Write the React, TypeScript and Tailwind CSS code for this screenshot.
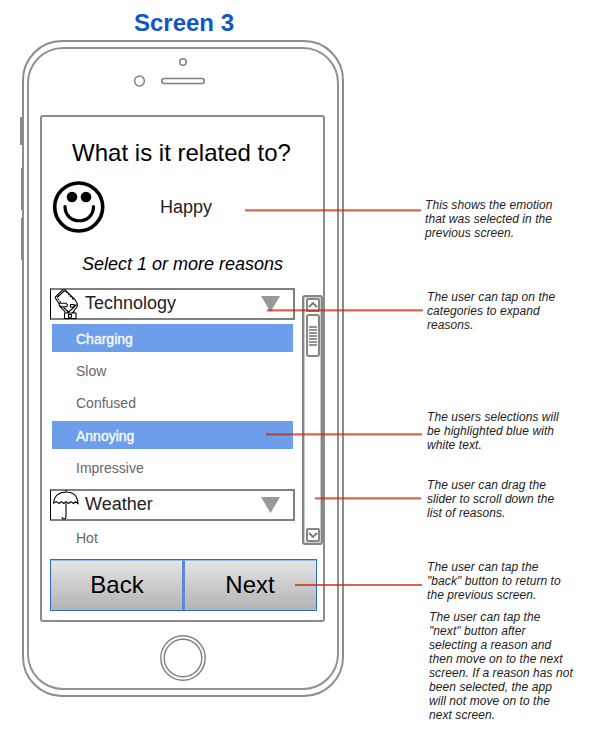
import React from "react";

const HandPhoneIcon = () => (
  <svg className="ml-[3px] h-[30px] w-[25px] shrink-0" viewBox="0 0 25 30" fill="none" stroke="#000" strokeWidth="1.1">
    <path d="M1 8.500 8.500 1 11 .8 21 10.500l2.500 4.500-.5 3-3 3.500v2M1 8.500 5 14.500M3.200 8.500 9.500 2.500l2-.2" />
    <path d="M3.500 9.500 7 13.500M12 2.500l8 8.500" strokeDasharray="2 1" />
    <path d="M5.200 14.200h6.800l1.500 1.800-1 1.800H7.500l-2.300-1.600zM5.500 17l3.500 3.500 2.500 3M9.500 18.500l5 4.500 3-2.500 5-5M16.500 15.500h3.500v2.500h-3.500z" />
    <path d="M10.500 24h11.500v5.500h-11.500zM13 22.500l2 1.500M20 22.500l-2 1.500M14.500 25.500h3v2.800h-3z" />
  </svg>
);

const UmbrellaIcon = () => (
  <svg className="ml-[2px] h-[30px] w-[26px] shrink-0" viewBox="0 0 26 30" fill="none" stroke="#000" strokeWidth="1.1">
    <path d="M13 0v2M.7 13C1 6 6 2 13 2s11.600 4 12 11.500l-2.400-1.800-2.200 1.800-2.500-1.900-2.200 1.900-2.700-1.900-2.300 1.900-2.400-1.900-2.200 1.900-2.700-1.900z" />
    <path d="M13 13v13.500c0 3.200-4 3.200-4 .5" />
  </svg>
);

const Category = ({ icon, label }: { icon: React.ReactNode; label: string }) => (
  <div className="flex h-8 w-[245px] items-center border-2 border-l border-[#808080] border-l-black">
    {icon}
    <span className="-mt-[3px] ml-auto w-[176px] text-lg leading-6 text-[#222]">{label}</span>
    <svg className="-mt-px mr-[13px] h-4 w-[19px] shrink-0" viewBox="0 0 19 16">
      <path d="M0 0h19L9.500 16z" fill="#999" />
    </svg>
  </div>
);

const Reason = ({ label, selected = false }: { label: string; selected?: boolean }) => (
  <div
    className={`ml-[2px] flex h-7 w-[241px] items-center pl-6 text-sm ${
      selected ? "bg-[#6d9eeb] text-white [-webkit-text-stroke:0.3px_white]" : "text-[#666]"
    }`}
  >
    <span className="mt-[2px]">{label}</span>
  </div>
);

const Chevron = ({ d }: { d: string }) => (
  <div className="grid h-[14px] w-[14px] shrink-0 place-items-center rounded-[2px] border-2 border-[#858585]">
    <svg className="h-[10px] w-[10px]" viewBox="0 0 10 10" fill="none" stroke="#777" strokeWidth="1.8">
      <path d={d} />
    </svg>
  </div>
);

const Scrollbar = () => (
  <div className="mt-[7px] ml-[7px] flex h-[250px] w-[21px] flex-col items-center rounded-[3px] border-2 border-[#858585] p-px shadow-[inset_0_0_0_1px_#ccc]">
    <Chevron d="M1 7 5 3l4 4" />
    <div className="mt-[2px] flex h-[43px] w-[14px] shrink-0 flex-col items-center justify-center gap-px rounded-[3px] border-2 border-[#858585]">
      {[0, 1, 2, 3, 4, 5, 6].map((i) => (
        <div key={i} className="h-[2px] w-2 bg-[#929292]" />
      ))}
    </div>
    <div className="mt-auto">
      <Chevron d="M1 3l4 4 4-4" />
    </div>
  </div>
);

const Note = ({ lines, className }: { lines: string[]; className: string }) => (
  <p className={`text-xs leading-[14px] tracking-[0.07px] whitespace-nowrap text-[#222] italic ${className}`}>
    {lines.map((line) => (
      <span key={line} className="block">{line}</span>
    ))}
  </p>
);

const leaders = [
  [245, 421, 210.3],
  [267, 423, 310.3],
  [266, 422, 434.3],
  [315, 421, 498.3],
  [295, 422, 585],
];

export default function App() {
  return (
    <main className="relative flex h-[742px] w-[591px] overflow-hidden bg-white font-['Liberation_Sans',Arial,sans-serif]">
      <div className="flex w-[344px] shrink-0 flex-col pl-[22px]">
        <h1 className="h-10 pt-[7px] pl-[2px] text-center text-2xl font-bold text-[#1155cc]">Screen 3</h1>
        <div className="relative h-[657px] w-[322px] rounded-[40px] border-2 border-[#8c8c8c] p-[5px_3px_5px]">
          <div className="absolute top-[75px] -left-[4px] h-7 w-[2px] bg-[#888]" />
          <div className="absolute top-[126px] -left-[3px] h-[42px] w-px bg-[#888]" />
          <div className="absolute top-[176px] -left-[3px] h-[42px] w-px bg-[#888]" />
          <div className="flex h-[643px] w-[312px] flex-col items-center rounded-[36px] border-2 border-[#929292]">
            <svg className="h-[66px] w-[308px] shrink-0" viewBox="0 1 308 66" fill="none" stroke="#808080" strokeWidth="1.500">
              <circle cx="154" cy="14" r="3.300" />
              <circle cx="110.500" cy="33" r="4.900" />
              <rect x="132.800" y="30.500" width="42.500" height="5" rx="2.500" />
            </svg>
            <section className="-ml-px h-[507px] w-[285px] shrink-0 rounded-[3px] border-2 border-[#8c8c8c] pl-2 text-black">
              <h2 className="mt-[20px] w-[263px] text-center text-2xl leading-8">What is it related to?</h2>
              <div className="mt-[11px] flex h-[54px] items-center">
                <svg className="ml-[2px] h-[54px] w-[54px]" viewBox="0 0 54 54">
                  <circle cx="26.700" cy="27" r="24" fill="none" stroke="#000" strokeWidth="3.600" />
                  <circle cx="20" cy="17" r="5.300" />
                  <circle cx="34" cy="17" r="5.300" />
                  <path d="M13 26.500c0 19 28.500 19 28.500 0" fill="none" stroke="#000" strokeWidth="3.200" strokeLinecap="round" />
                </svg>
                <span className="ml-[54px] text-lg text-[#222]">Happy</span>
              </div>
              <p className="mt-[16px] h-[38px] w-[265px] text-center text-lg leading-7 italic">Select 1 or more reasons</p>
              <div className="flex h-[271px] items-start overflow-hidden">
                <div className="w-[245px] shrink-0">
                  <Category icon={<HandPhoneIcon />} label="Technology" />
                  <div className="flex flex-col gap-1 pt-1">
                    <Reason label="Charging" selected />
                    <Reason label="Slow" />
                    <Reason label="Confused" />
                    <div className="mt-px h-[27px]">
                      <Reason label="Annoying" selected />
                    </div>
                    <div className="mt-px h-[27px]">
                      <Reason label="Impressive" />
                    </div>
                  </div>
                  <div className="mt-[9px]">
                    <Category icon={<UmbrellaIcon />} label="Weather" />
                  </div>
                  <div className="pt-[2px]">
                    <Reason label="Hot" />
                  </div>
                </div>
                <Scrollbar />
              </div>
              <div className="flex h-[52px] w-[267px] border border-[#2b68d2]">
                <button className="flex-1 border border-[#9bb8e8] border-r-[#5c88d6] border-l-transparent bg-linear-to-b from-[#e6e6e6] to-[#b3b3b3] bg-origin-border text-2xl">Back</button>
                <button className="flex-1 border border-l-2 border-[#9bb8e8] border-r-transparent border-l-[#5c88d6] bg-linear-to-b from-[#e6e6e6] to-[#b3b3b3] bg-origin-border text-2xl">Next</button>
              </div>
            </section>
            <svg className="mt-[12px] h-[48px] w-12 shrink-0" viewBox="0 0 48 48" fill="none" stroke="#808080" strokeWidth="1.400">
              <circle cx="24" cy="24" r="22.200" />
              <circle cx="24" cy="24" r="18.800" />
            </svg>
          </div>
        </div>
      </div>
      <aside className="flex flex-col pt-[198px] pl-[81px]">
        <Note className="" lines={["This shows the emotion", "that was selected in the", "previous screen."]} />
        <Note className="mt-[50px] ml-[2px]" lines={["The user can tap on the", "categories to expand", "reasons."]} />
        <Note className="mt-[78px] ml-[2px]" lines={["The users selections will", "be highlighted blue with", "white text."]} />
        <Note className="mt-[26px] ml-[2px]" lines={["The user can drag the", "slider to scroll down the", "list of reasons."]} />
        <Note className="mt-[40px] ml-[2px]" lines={["The user can tap the", "\"back\" button to return to", "the previous screen."]} />
        <Note
          className="mt-[8px] ml-[4px]"
          lines={["The user can tap the", "\"next\" button after", "selecting a reason and", "then move on to the next", "screen. If a reason has not", "been selected, the app", "will not move on to the", "next screen."]}
        />
      </aside>
      <svg className="pointer-events-none absolute inset-0 h-[742px] w-[591px]" viewBox="0 0 591 742">
        {leaders.map(([x1, x2, y]) => (
          <line key={y} x1={x1} x2={x2} y1={y} y2={y} stroke="#cc2200" strokeOpacity="0.7" strokeWidth="2.200" />
        ))}
      </svg>
    </main>
  );
}
